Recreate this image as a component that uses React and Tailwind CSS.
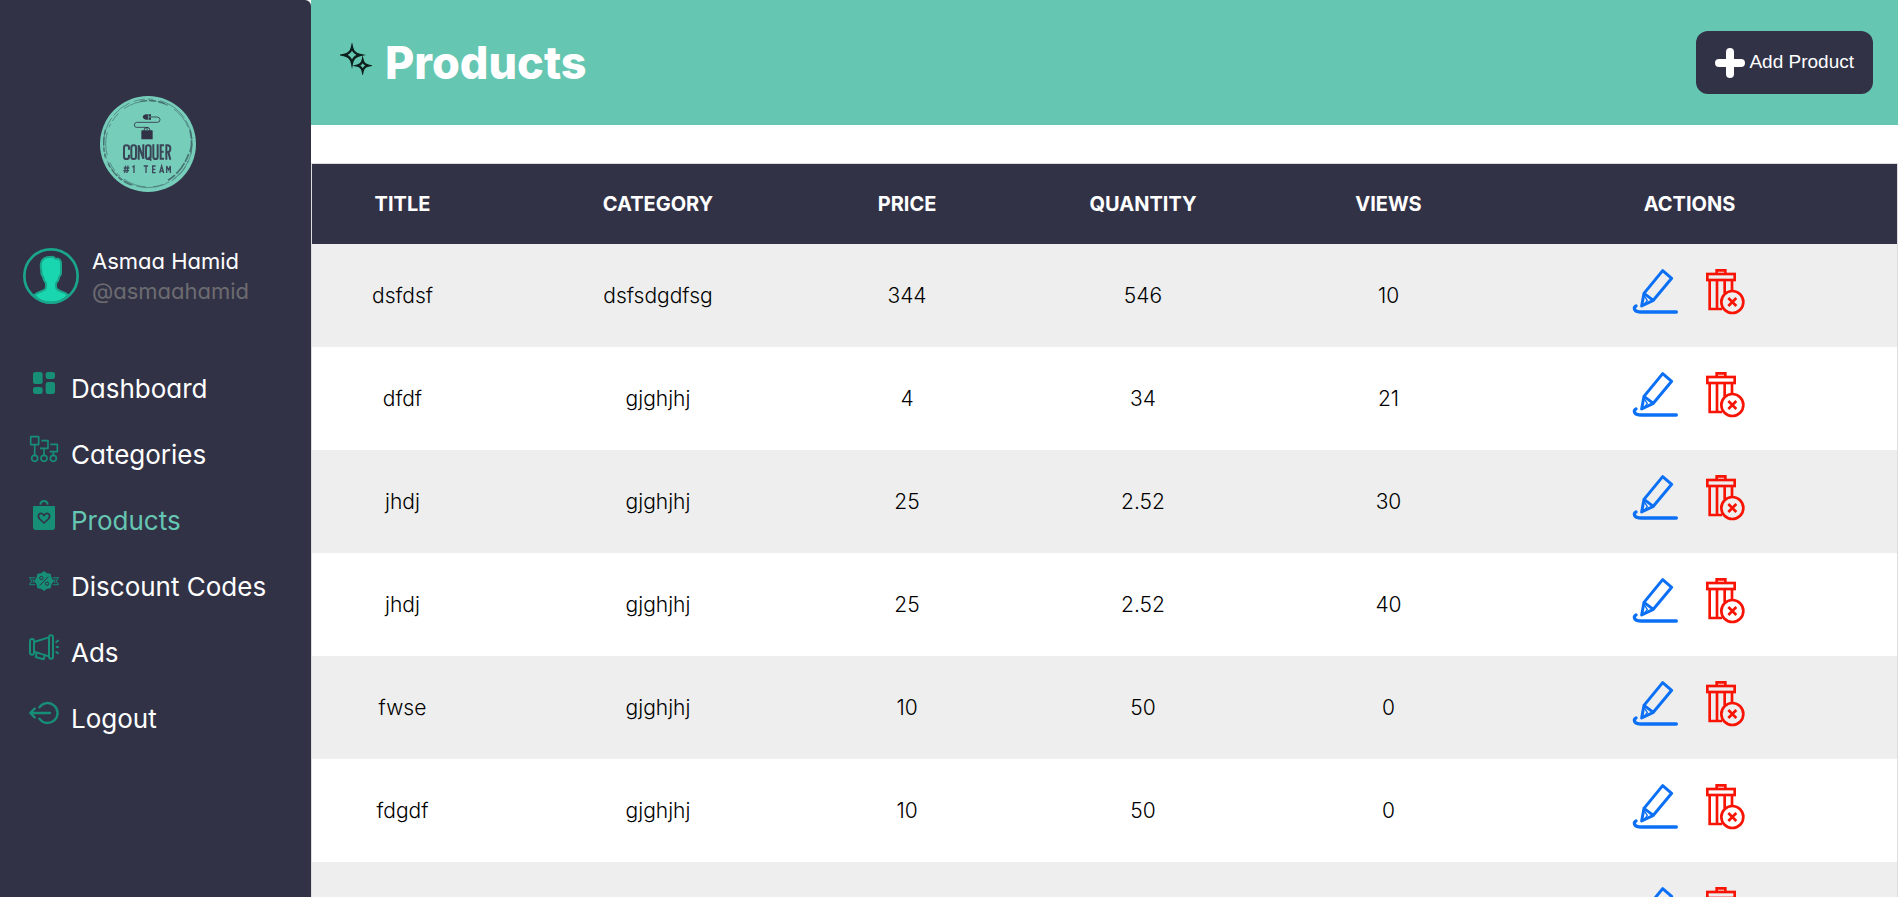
const products = [
  { title: "dsfdsf", category: "dsfsdgdfsg", price: "344", quantity: "546", views: "10" },
  { title: "dfdf", category: "gjghjhj", price: "4", quantity: "34", views: "21" },
  { title: "jhdj", category: "gjghjhj", price: "25", quantity: "2.52", views: "30" },
  { title: "jhdj", category: "gjghjhj", price: "25", quantity: "2.52", views: "40" },
  { title: "fwse", category: "gjghjhj", price: "10", quantity: "50", views: "0" },
  { title: "fdgdf", category: "gjghjhj", price: "10", quantity: "50", views: "0" },
  { title: "fdgdf", category: "gjghjhj", price: "10", quantity: "50", views: "0" },
];

function Logo() {
  return (
    <svg className="size-24" viewBox="60 48 288 288" role="img" aria-label="Conquer #1 Team">
      <circle cx="204" cy="192" r="144" fill="#75cdba" />
      <g fill="none" stroke="#46706f">
        <circle cx="204" cy="190" r="133" strokeWidth="2" strokeDasharray="60 14 34 8 18 20 90 10" />
        <circle cx="206" cy="192" r="129" strokeWidth="2" strokeDasharray="30 22 70 16 12 9" />
        <path d="M330 150Q340 190 330 216M326 222Q306 276 262 302" strokeWidth="5" strokeDasharray="26 4 40 6" />
        <path d="M180 64Q226 56 262 74" strokeWidth="4" strokeDasharray="22 5" />
        <path d="M76 150Q66 190 76 232M84 250Q110 300 156 316" strokeWidth="4" strokeDasharray="14 7 26 5" />
      </g>
      <path d="M213 111H232Q240 112 240 119Q240 127 232 127H170Q163 128 163 135Q163 142 170 142H196Q202 142 202 150" fill="none" stroke="#323247" strokeWidth="2.5" />
      <path d="M198 103H213V119H198Q189 118 188 111Q189 104 198 103Z" fill="#323247" />
      <path d="M205 103V119M205 111H213" stroke="#75cdba" strokeWidth="2" />
      <path d="M193 152V148Q194 142 201 142Q208 142 209 148V152" fill="none" stroke="#323247" strokeWidth="3" />
      <rect x="184" y="151" width="34" height="27" rx="2" fill="#323247" />
      <g fill="none" stroke="#3a4658" strokeWidth="6">
        <path d="M147 209V202Q147 196 139 196Q132 196 132 203V230Q132 237 139 237Q147 237 147 230V224" />
        <rect x="154" y="196" width="14" height="41" rx="6" />
        <path d="M176 239V196L190 236V193" />
        <path d="M198 203Q198 196 205 196Q212 196 212 203V230Q212 237 205 237Q198 237 198 230ZM207 230L213 242" />
        <path d="M220 193V230Q220 237 227 237Q233 237 233 230V193" />
        <path d="M252 196H242V236H252M242 215H251" />
        <path d="M259 239V196H264Q271 197 271 206Q271 215 264 216H259M265 216L271 239" />
      </g>
      <g fill="none" stroke="#3c4a5b" strokeWidth="4">
        <path d="M137 257L134 279M144 257L141 279M131 264H148M130 272H147" />
        <path d="M157 261L162 258V279M191 258H204M198 258V279M227 258H218V278H227M218 268H226M239 279L245 258L251 279M241 273H249M260 279V258L266 270L271 258V279" />
      </g>
    </svg>
  );
}

function Avatar() {
  return (
    <svg className="size-14 shrink-0" viewBox="69 54 168 168" aria-hidden="true">
      <path d="M102 195Q112 188 126 183Q138 179 138 170V160Q130 150 129 140Q123 134 124 122Q120 104 126 92Q134 80 152 81Q160 79 166 86H174Q184 90 183 104V122Q184 134 178 140Q176 152 168 160V170Q168 178 180 183Q196 188 205 195Q184 219 153 219Q122 219 102 195Z" fill="#1ad6b0" stroke="#1aa68b" strokeWidth="6" />
      <circle cx="153" cy="138" r="80" fill="none" stroke="#1aa68b" strokeWidth="8" />
    </svg>
  );
}

function DashboardIcon() {
  return (
    <svg className="size-[30px] shrink-0" viewBox="87 54 90 90" fill="#168f76" aria-hidden="true">
      <rect x="99" y="66" width="29" height="36" rx="7" />
      <rect x="137" y="66" width="28" height="21" rx="7" />
      <rect x="99" y="111" width="29" height="21" rx="7" />
      <rect x="137" y="96" width="28" height="36" rx="7" />
    </svg>
  );
}

function CategoriesIcon() {
  return (
    <svg className="size-[30px] shrink-0" viewBox="87 252 90 90" fill="none" stroke="#168f76" strokeWidth="5" aria-hidden="true">
      <rect x="92" y="260" width="24" height="24" rx="1" />
      <path d="M104 284V315M124 272H144V295H120M132 295V315M151 283H172V305H149M160 305V315" strokeLinejoin="round" />
      <circle cx="104" cy="325" r="9" />
      <circle cx="132" cy="325" r="9" />
      <circle cx="160" cy="325" r="9" />
    </svg>
  );
}

function ProductsIcon() {
  return (
    <svg className="size-[30px] shrink-0" viewBox="87 450 90 90" fill="none" aria-hidden="true">
      <path d="M101 468H163Q165 468 165 470V530Q165 540 155 540H109Q99 540 99 530V470Q99 468 101 468Z" fill="#168f76" />
      <path d="M121 464Q122 453 132 453Q142 453 143 464" stroke="#168f76" strokeWidth="6" />
      <path d="M132 519L119 507Q112 499 117 493Q125 486 132 497Q139 486 147 493Q152 499 145 507Z" stroke="#323247" strokeWidth="5" strokeLinejoin="round" />
    </svg>
  );
}

function DiscountIcon() {
  return (
    <svg className="size-[30px] shrink-0" viewBox="87 48 90 90" fill="none" aria-hidden="true">
      <path d="M106 83H89L95 93L89 104H106M158 83H175L169 93L175 104H158M98 88L103 93L98 98M166 88L161 93L166 98" stroke="#168f76" strokeWidth="4" opacity=".75" />
      <path d="M132 63L141 70L152 71L154 82L161 93L154 104L152 115L141 116L132 123L123 116L112 115L110 104L103 93L110 82L112 71L123 70Z" fill="#168f76" />
      <g stroke="#323247" strokeWidth="3">
        <path d="M145 80L119 107" />
        <circle cx="124" cy="84" r="5" />
        <circle cx="141" cy="101" r="5" />
      </g>
    </svg>
  );
}

function AdsIcon() {
  return (
    <svg className="size-[30px] shrink-0" viewBox="87 245 90 90" fill="none" stroke="#168f76" strokeWidth="6" strokeLinecap="round" strokeLinejoin="round" aria-hidden="true">
      <rect x="90" y="266" width="12" height="47" rx="6" />
      <rect x="147" y="255" width="12" height="70" rx="6" />
      <path d="M102 275L147 261M102 304L147 318M110 309L107 320L131 327L134 316M169 275L174 271M170 290H174M169 305L174 309" />
    </svg>
  );
}

function LogoutIcon() {
  return (
    <svg className="size-[30px] shrink-0" viewBox="87 444 90 90" fill="none" stroke="#168f76" strokeWidth="7" strokeLinecap="round" strokeLinejoin="round" aria-hidden="true">
      <path d="M150 489H91M104 476L91 489L104 502M118 472A30 30 0 1 1 118 506" />
    </svg>
  );
}

function SparkleIcon() {
  return (
    <svg className="size-8 shrink-0" viewBox="150 130 96 96" fill="none" stroke="#0d1f1c" strokeWidth="7" strokeMiterlimit="10" aria-hidden="true">
      <path d="M186 143Q190 162 210 166Q190 170 186 190Q182 170 162 166Q182 162 186 143Z" />
      <path d="M218 182Q221 195 235 198Q221 201 218 214Q215 201 202 198Q215 195 218 182Z" />
    </svg>
  );
}

function PlusIcon() {
  return (
    <svg className="size-[30px] shrink-0" viewBox="0 0 30 30" stroke="#fff" strokeWidth="8" strokeLinecap="round" aria-hidden="true">
      <path d="M15 4V26M4 15H26" />
    </svg>
  );
}

function EditIcon() {
  return (
    <svg className="size-12" viewBox="36 36 144 144" fill="none" stroke="#0b70f5" strokeWidth="9" strokeLinejoin="round" strokeLinecap="round" aria-hidden="true">
      <path d="M128 47L155 70L100 136L72 115ZM72 115L65 153L100 136" />
      <path d="M74 124L82 137L70 150" strokeWidth="4" />
      <path d="M48 153Q40 157 45 165Q49 171 64 171H169" strokeWidth="10" />
    </svg>
  );
}

function TrashIcon() {
  return (
    <svg className="size-12" viewBox="246 36 144 144" fill="none" stroke="#f81404" strokeWidth="8" aria-hidden="true">
      <path d="M290 55V46H316V55" />
      <rect x="262" y="57" width="82" height="18" />
      <path d="M269 75V162H306M291 75V162M314 75V115M336 75V106" />
      <circle cx="337" cy="141" r="33" />
      <path d="M325 129L349 153M349 129L325 153" />
    </svg>
  );
}

const links = [
  { label: "Dashboard", Icon: DashboardIcon },
  { label: "Categories", Icon: CategoriesIcon },
  { label: "Products", Icon: ProductsIcon, active: true },
  { label: "Discount Codes", Icon: DiscountIcon },
  { label: "Ads", Icon: AdsIcon },
  { label: "Logout", Icon: LogoutIcon },
];

function Sidebar() {
  return (
    <aside className="flex w-[311px] shrink-0 flex-col rounded-tr-md bg-[#323247] pt-24 text-white">
      <div className="flex justify-center pr-4">
        <Logo />
      </div>
      <div className="mt-[54px] flex items-center gap-[13px] pl-[23px]">
        <Avatar />
        <div className="text-[22px] leading-[30px]">
          <p>Asmaa Hamid</p>
          <p className="text-[#6c6c70]">@asmaahamid</p>
        </div>
      </div>
      <nav className="mt-[62px] flex flex-col gap-6 pl-[29px]">
        {links.map(({ label, Icon, active }) => (
          <a
            key={label}
            href="#"
            aria-current={active ? "page" : undefined}
            className={`flex items-start gap-3 text-[26px] leading-[42px] ${active ? "text-[#65c6b2]" : "text-white"}`}
          >
            <Icon />
            {label}
          </a>
        ))}
      </nav>
    </aside>
  );
}

function ProductTable() {
  return (
    <table className="w-full table-fixed border-collapse text-center">
      <colgroup>
        <col className="w-[181px]" />
        <col className="w-[330px]" />
        <col className="w-[168px]" />
        <col className="w-[304px]" />
        <col className="w-[187px]" />
        <col className="w-[415px]" />
      </colgroup>
      <thead className="bg-[#323247] text-xl text-white uppercase">
        <tr className="h-20">
          {["Title", "Category", "Price", "Quantity", "Views", "Actions"].map((name) => (
            <th key={name} scope="col" className="font-bold">{name}</th>
          ))}
        </tr>
      </thead>
      <tbody className="text-[21px] leading-5 font-light text-black">
        {products.map((product, index) => (
          <tr key={index} className="h-[103px] odd:bg-[#eeeeee] even:bg-white">
            <td>{product.title}</td>
            <td>{product.category}</td>
            <td>{product.price}</td>
            <td>{product.quantity}</td>
            <td>{product.views}</td>
            <td>
              <div className="flex justify-center gap-[22px] pb-[10px] pl-[2px]">
                <button type="button" aria-label="Edit product"><EditIcon /></button>
                <button type="button" aria-label="Delete product"><TrashIcon /></button>
              </div>
            </td>
          </tr>
        ))}
      </tbody>
    </table>
  );
}

export default function App() {
  return (
    <div className="flex h-screen overflow-hidden bg-white font-['Inter',sans-serif] [font-feature-settings:'cv11']">
      <Sidebar />
      <main className="min-w-0 flex-1 overflow-y-auto [scrollbar-width:none]">
        <header className="flex h-[125px] items-center justify-between bg-[#65c6b2] pr-[25px] pl-[29px]">
          <div className="flex items-center gap-[13px]">
            <div className="pb-2">
              <SparkleIcon />
            </div>
            <h1 className="text-[45px] font-extrabold text-white">Products</h1>
          </div>
          <button
            type="button"
            className="flex h-[63px] items-center gap-1 rounded-xl bg-[#323247] px-[19px] font-['Liberation_Sans',sans-serif] text-[19px] text-white"
          >
            <PlusIcon />
            Add Product
          </button>
        </header>
        <div className="mt-[38px] border border-[#dddddd]">
          <ProductTable />
        </div>
      </main>
    </div>
  );
}
